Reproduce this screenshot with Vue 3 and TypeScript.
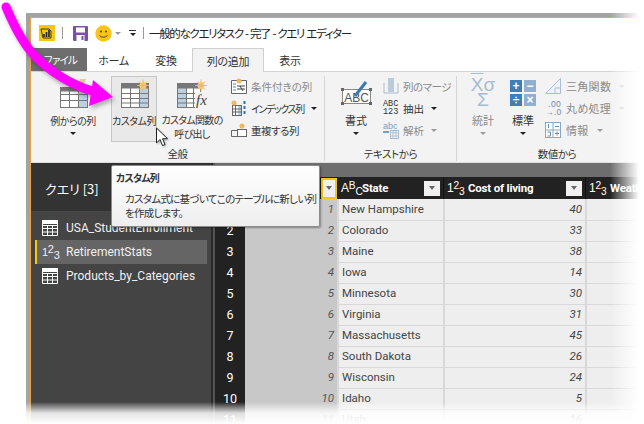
<script setup lang="ts">
interface Row { n: number; state: string; cost: number }
const names = ['New Hampshire','Colorado','Maine','Iowa','Minnesota','Virginia','Massachusetts','South Dakota','Wisconsin','Idaho','Utah']
const costs = [40,33,38,14,30,31,45,26,24,5,16]
const rows: Row[] = names.map((state, i) => ({ n: i + 1, state, cost: costs[i] }))
</script>

<template>
  <div class="page">
    <div class="window">
      <div class="inner">
        <div class="title">
          <svg class="t-logo" width="16" height="16" viewBox="0 0 16 16"><rect width="16" height="16" fill="#f2c811"/><path d="M2 4h8l2 2v7H4z" fill="none" stroke="#3a3a2a"/><path d="M5 12V9M7.500 12V7M10 12V5" stroke="#222" stroke-width="1.600"/></svg>
          <i class="t-sep"></i>
          <svg class="t-save" width="15" height="15" viewBox="0 0 15 15"><rect width="15" height="15" rx="1" fill="#7d4fa8"/><rect x="3" y="1.500" width="9" height="5" fill="#fff"/><rect x="3.500" y="9" width="8" height="6" fill="#fff"/><rect x="8.500" y="10" width="2" height="4" fill="#7d4fa8"/></svg>
          <svg class="t-smile" width="17" height="17" viewBox="0 0 17 17"><circle cx="8.500" cy="8.500" r="8.200" fill="#fcc419"/><circle cx="6" cy="6.500" r="1" fill="#444"/><circle cx="11" cy="6.500" r="1" fill="#444"/><path d="M4.500 10.500Q8.500 14 12.500 10.500" fill="none" stroke="#444"/></svg>
          <i class="caret grey t-caret"></i>
          <span class="t-more"><b></b><i class="caret"></i></span>
          <i class="t-sep"></i>
          <span class="t-text">一般的なクエリタスク - 完了 - クエリ エディター</span>
        </div>

        <div class="tabs">
          <div class="tab file">ファイル</div>
          <div class="tab home">ホーム</div>
          <div class="tab conv">変換</div>
          <div class="tab active">列の追加</div>
          <div class="tab view">表示</div>
        </div>

        <div class="ribbon">
          <section class="group g1">
            <div class="g-body">
              <div class="big b-example">
                <svg width="29" height="29" viewBox="0 0 29 29"><rect x=".5" y="8.500" width="27" height="20" fill="#fff" stroke="#777"/><rect x="18" y="9" width="9" height="19" fill="#bdd0e2"/><path d="M.5 15.500h27M.5 21.500h27M9.500 12v16M18.500 12v16" stroke="#777" fill="none"/><rect x=".5" y="8.500" width="27" height="4" fill="#777"/><path d="M20 0h6l-3 6h3l-8 10 2-7h-3z" fill="#f0c890"/></svg>
                <span class="b-label">例からの列</span>
                <i class="caret"></i>
              </div>
              <div class="big b-custom">
                <svg width="29" height="29" viewBox="0 0 29 29"><rect x=".5" y="4.500" width="27" height="24" fill="#fff" stroke="#777"/><rect x="18" y="9" width="9" height="19" fill="#bdd0e2"/><path d="M.5 14.500h27M.5 19.500h27M.5 24h27M9.500 9v19M18.500 9v19" stroke="#777" fill="none"/><rect x=".5" y="4.500" width="27" height="5" fill="#777"/><circle cx="22" cy="6.500" r="3.500" fill="#f7d18a"/><path d="M22 .5v12M16 6.500h12M18 2.500l8 8M26 2.500l-8 8" stroke="#eeb85c"/></svg>
                <span class="b-label">カスタム列</span>
              </div>
              <div class="big b-invoke">
                <svg width="31" height="29" viewBox="0 0 31 29"><rect x=".5" y="4.500" width="23" height="24" fill="#fff" stroke="#777"/><rect x="1" y="9" width="8" height="19" fill="#bdd0e2"/><path d="M.5 14.500h23M.5 19.500h23M.5 24h23M9.500 9v19M16.500 9v19" stroke="#777" fill="none"/><rect x=".5" y="4.500" width="23" height="5" fill="#777"/><rect x="18" y="13" width="13" height="16" fill="#f3f3f3"/><circle cx="24" cy="6.500" r="3.500" fill="#f7d18a"/><path d="M24 .5v12M18 6.500h12M20 2.500l8 8M28 2.500l-8 8" stroke="#eeb85c"/></svg>
                <em class="fx">fx</em>
                <span class="b-label">カスタム関数の<br>呼び出し</span>
              </div>
              <div class="smalls s-general">
                <div class="small">
                  <svg width="16" height="16" viewBox="0 0 16 16"><path d="M.5 2.500h15v13H.5z" fill="#fff" stroke="#666"/><path d="M2 6h3M2 9h3M2 12h3" stroke="#4a85c0"/><path d="M6 8h8M6 11h8M9 8l3 5" stroke="#444"/><circle cx="8" cy="3" r="2.500" fill="#eeb85c"/></svg>
                  <span class="muted">条件付きの列</span>
                </div>
                <div class="small">
                  <svg width="16" height="16" viewBox="0 0 16 16"><rect x="1.500" y="5.500" width="9" height="10" fill="#fff" stroke="#666"/><rect x="7" y="6" width="3" height="9" fill="#bdd0e2"/><path d="M1.500 9h9M1.500 12h9M4.500 6v9" stroke="#666"/><circle cx="3" cy="3" r="2.500" fill="#eeb85c"/><path d="M13.500 1v3M13.500 6v3M13.500 11v3" stroke="#2d72b5" stroke-width="2"/></svg>
                  <span class="dark kata">インデックス列</span><i class="caret"></i>
                </div>
                <div class="small">
                  <svg width="16" height="16" viewBox="0 0 16 16"><path d="M6 8.500H.5v6H6" fill="none" stroke="#666"/><rect x="6.500" y="7.500" width="9" height="7" fill="#fff" stroke="#666"/><circle cx="11" cy="4" r="2.500" fill="#eeb85c"/></svg>
                  <span class="dark tight">重複する列</span>
                </div>
              </div>
            </div>
            <div class="g-label">全般</div>
          </section>

          <section class="group g2">
            <div class="g-body">
              <div class="big b-format">
                <svg width="31" height="29" viewBox="0 0 31 29"><rect x="1.500" y="10.500" width="28" height="14" fill="#fff" stroke="#888"/><text x="15.500" y="22.500" text-anchor="middle" font-size="12" font-family="Liberation Sans, sans-serif" fill="#555">ABC</text><path d="M14 17L25 3" stroke="#3b78b5" stroke-width="3"/><rect width="3" height="3" x="0" y="9" fill="#666"/><rect width="3" height="3" x="28" y="9" fill="#666"/><rect width="3" height="3" x="0" y="23" fill="#666"/><rect width="3" height="3" x="28" y="23" fill="#666"/></svg>
                <span class="b-label">書式</span>
                <i class="caret"></i>
              </div>
              <div class="smalls s-text">
                <div class="small">
                  <svg width="16" height="16" viewBox="0 0 16 16"><path d="M1 5v10h14V5" fill="none" stroke="#a8bdd2"/><rect x="5" y="0" width="6" height="14" fill="#bccbd9"/></svg>
                  <span class="muted tight">列のマージ</span>
                </div>
                <div class="small">
                  <span class="abc123">ABC<br>123</span>
                  <span class="dark">抽出</span><i class="caret"></i>
                </div>
                <div class="small">
                  <span class="abc-ic">
                    <span class="abc">abc</span>
                    <svg width="16" height="9" viewBox="0 0 16 9"><rect x="7.500" y=".5" width="8" height="8" fill="#fff" stroke="#a8bdd2"/><path d="M7.500 3h8M7.500 6h8M10 1v7M13 1v7" stroke="#a8bdd2"/><path d="M0 2h6" stroke="#7a9ec0" stroke-width="2"/></svg>
                  </span>
                  <span class="muted">解析</span><i class="caret grey"></i>
                </div>
              </div>
            </div>
            <div class="g-label">テキストから</div>
          </section>

          <section class="group g3">
            <div class="g-body">
              <div class="big b-stat">
                <div class="sigma"><span class="x-bar">X</span>σ<br>Σ</div>
                <span class="b-label muted">統計</span>
                <i class="caret grey"></i>
              </div>
              <div class="big b-std">
                <div class="ops"><span>+</span><span class="l">−</span><span>÷</span><span class="l">×</span></div>
                <span class="b-label">標準</span>
                <i class="caret"></i>
              </div>
              <div class="smalls s-num">
                <div class="small">
                  <svg width="16" height="16" viewBox="0 0 16 16"><path d="M.5 15.500L15.500.5v15z" fill="#f0f4f8" stroke="#a8bdd2"/><path d="M10 15v-5h5" fill="none" stroke="#a8bdd2"/></svg>
                  <span class="muted">三角関数</span><i class="caret pale"></i>
                </div>
                <div class="small">
                  <span class="dec">.00<br>→.0</span>
                  <span class="muted">丸め処理</span><i class="caret pale"></i>
                </div>
                <div class="small">
                  <svg width="16" height="16" viewBox="0 0 16 16"><rect x=".5" y=".5" width="15" height="15" fill="#fff" stroke="#8ba6c1"/><path d="M8 .5v15M.5 8h15" stroke="#8ba6c1"/><path d="M10 4.500h4M10 11.500h4M12 9.500v4" stroke="#6f8daa"/><path d="M3.500 2v4M2.500 10h3v4h-3" stroke="#6f8daa" fill="none"/></svg>
                  <span class="muted">情報</span><i class="caret grey"></i>
                </div>
              </div>
            </div>
            <div class="g-label">数値から</div>
          </section>
        </div>

        <div class="body">
          <aside class="queries">
            <div class="q-head">クエリ [3]</div>
            <div class="q-item">
              <svg class="q-icon" width="16" height="16" viewBox="0 0 16 16"><path d="M.5.500h15v15H.5zM.5 5.500h15M.5 8.500h15M.5 12h15M5.500 5v11M10.500 5v11" fill="none" stroke="#fff"/><rect width="16" height="4" fill="#fff"/></svg>
              <span>USA_StudentEnrollment</span>
            </div>
            <div class="q-item selected">
              <span class="q-num">1<sup>2</sup><sub>3</sub></span>
              <span>RetirementStats</span>
            </div>
            <div class="q-item">
              <svg class="q-icon" width="16" height="16" viewBox="0 0 16 16"><path d="M.5.500h15v15H.5zM.5 5.500h15M.5 8.500h15M.5 12h15M5.500 5v11M10.500 5v11" fill="none" stroke="#fff"/><rect width="16" height="4" fill="#fff"/></svg>
              <span>Products_by_Categories</span>
            </div>
          </aside>

          <div class="data">
            <div class="formula"></div>
            <div class="grid head">
              <div class="num-h"></div>
              <div class="cell-h first"><i class="filter on"><b></b></i></div>
              <div class="cell-h"><span class="type">A<sup>B</sup><sub>C</sub></span><span class="name">State</span><i class="filter"><b></b></i></div>
              <div class="cell-h"><span class="type">1<sup>2</sup><sub>3</sub></span><span class="name">Cost of living</span><i class="filter"><b></b></i></div>
              <div class="cell-h"><span class="type">1<sup>2</sup><sub>3</sub></span><span class="name">Weather</span></div>
            </div>
            <div v-for="r in rows" :key="r.n" class="grid row">
              <div class="num">{{ r.n }}</div>
              <div class="c1">{{ r.n }}</div>
              <div class="c2">{{ r.state }}</div>
              <div class="c3">{{ r.cost }}</div>
              <div class="c4"></div>
            </div>
          </div>
        </div>
      </div>
    </div>

    <div class="fade-right"></div>
    <div class="fade-bottom"></div>

    <div class="tooltip">
      <div class="tip-title">カスタム列</div>
      <div class="tip-body">カスタム式に基づいてこのテーブルに新しい列<br>を作成します。</div>
    </div>

    <svg class="arrow" width="130" height="120" viewBox="0 0 130 120">
      <path d="M6 7C14 26 24 46 37 58C50 71 72 86 96 92" fill="none" stroke="#ff00ff" stroke-width="9" stroke-linecap="round"/>
      <path d="M93 80L113 97L89 106Z" fill="#ff00ff"/>
    </svg>

    <svg class="cursor" width="14" height="20" viewBox="0 0 14 20">
      <path d="M1.500 1v15l3.500-3.500 2.500 6 2.500-1-2.500-5.800h5z" fill="#fff" stroke="#222" stroke-linejoin="round"/>
    </svg>
  </div>
</template>

<style>
html, body { margin: 0; background: #fff; }
</style>

<style scoped>
.page {
  position: relative;
  width: 644px;
  height: 424px;
  overflow: hidden;
  background: #fff;
  font-family: "Noto Sans CJK JP", "Noto Sans", sans-serif;
  font-feature-settings: "palt";
  font-size: 11px;
  color: #333;
}
.window {
  margin: 13px 0 0 26px;
  width: 640px;
  height: 411px;
  box-sizing: border-box;
  border-top: 4px solid #a3a3a3;
  border-left: 4px solid #a3a3a3;
}
.inner {
  height: 100%;
  box-sizing: border-box;
  border-top: 1px solid #e8a33d;
  border-left: 1px solid #e8a33d;
  display: flex;
  flex-direction: column;
  background: #fff;
}
.title {
  height: 30px;
  flex: none;
  display: flex;
  align-items: center;
  padding-left: 8px;
}
.t-sep { width: 1px; height: 12px; background: #999; margin: 0 7px; }
.t-save { margin-left: 3px; }
.t-smile { margin-left: 7px; }
.t-caret { margin-left: 3px; }
.t-more { display: flex; flex-direction: column; align-items: center; gap: 2px; width: 7px; margin-left: 8px; }
.t-more b { width: 7px; height: 1px; background: #333; }
.t-text { font-size: 11.500px; color: #222; margin-left: -2px; white-space: nowrap; letter-spacing: -1.350px; word-spacing: 1px; }
.caret {
  display: inline-block;
  width: 0;
  height: 0;
  border: 3px solid transparent;
  border-top: 3.500px solid #222;
  border-bottom: 0;
}
.caret.grey { border-top-color: #9a9a9a; }
.caret.pale { border-top-color: #d6d6d6; }

.tabs {
  height: 23px;
  flex: none;
  display: flex;
  background: #fff;
  font-size: 11px;
}
.tab { display: flex; align-items: center; justify-content: center; box-sizing: border-box; letter-spacing: -.3px; }
.file { width: 56px; background: #6e6e6e; color: #fff; padding-left: 3px; font-size: 10.500px; letter-spacing: -.8px; }
.home { width: 53px; }
.conv { width: 52px; }
.active {
  width: 72px;
  border: 1px solid #cfcfcf;
  border-bottom: 0;
  background: #f3f3f3;
  position: relative;
  z-index: 1;
  margin-bottom: -1px;
}
.view { width: 52px; }

.ribbon {
  height: 92px;
  flex: none;
  display: flex;
  box-sizing: border-box;
  background: #f3f3f3;
  border-top: 1px solid #d4d4d4;
  border-bottom: 1px solid #dedede;
}
.group {
  display: flex;
  flex-direction: column;
  box-sizing: border-box;
  border-right: 1px solid #d6d6d6;
  margin: 4px 0 1px;
}
.g1 { width: 294px; }
.g2 { width: 132px; }
.g3 { width: 200px; border-right: 0; }
.g-body { height: 66px; display: flex; align-items: flex-start; }
.g-label { text-align: center; font-size: 10.500px; line-height: 14px; margin-top: 5px; letter-spacing: -.4px; }
.big {
  display: flex;
  flex-direction: column;
  align-items: center;
  box-sizing: border-box;
  height: 66px;
  position: relative;
}
.b-label { font-size: 10px; line-height: 15px; text-align: center; white-space: nowrap; margin-top: 5px; letter-spacing: -.5px; }
.b-example { width: 52px; margin-left: 16px; padding-top: 3px; }
.b-example svg { margin-left: 3px; }
.b-example .caret { margin-top: 4px; }
.b-custom {
  width: 46px;
  margin-left: 12px;
  padding-top: 2px;
  background: #e9e9e9;
  border: 1px solid #c6c6c6;
}
.b-custom svg { margin-left: 3px; }
.b-invoke { width: 64px; margin-left: 3px; padding-top: 3px; }
.b-invoke .b-label { line-height: 14px; letter-spacing: -.7px; }
.fx { position: absolute; left: 36px; top: 16px; font: italic 15px "Liberation Serif", serif; color: #444; }
.smalls { display: flex; flex-direction: column; margin-top: -1px; }
.small { height: 22px; display: flex; align-items: center; gap: 4px; white-space: nowrap; font-size: 10.500px; }
.small .caret { margin-left: 3px; }
.s-general { margin-left: 7px; }
.kata { font-size: 10px; letter-spacing: -1.400px; }
.tight { letter-spacing: -.5px; }
.muted { color: #8a8a8a; }
.dark { color: #333; }
.b-format { width: 40px; margin-left: 11px; padding-top: 3px; }
.b-format .b-label { font-size: 11px; letter-spacing: 0; }
.b-format .caret { margin-top: 4px; }
.s-text { margin-left: 7px; }
.abc-ic { width: 16px; display: flex; flex-direction: column; line-height: 8px; }
.abc { font: 9px/8px "Liberation Sans", sans-serif; color: #7a9ec0; }
.abc123 { font: 8.500px/8px "Liberation Mono", monospace; width: 16px; color: #333; }
.b-stat { width: 30px; margin-left: 11px; padding-top: 1px; }
.b-stat .b-label { margin-top: 3px; font-size: 11px; letter-spacing: 0; }
.b-stat .caret { margin-top: 4px; }
.sigma { font: 19px/15px "Liberation Sans", sans-serif; color: #a7bcd2; text-align: center; height: 33px; white-space: nowrap; }
.x-bar { text-decoration: overline; }
.b-std { width: 30px; margin-left: 10px; padding-top: 4px; }
.b-std .b-label { margin-top: 7px; font-size: 11px; letter-spacing: 0; }
.b-std .caret { margin-top: 4px; }
.ops { display: grid; grid-template-columns: 12px 12px; grid-auto-rows: 12px; gap: 2px; }
.ops span { background: #3e7fbb; color: #fff; font: bold 12px/12px "Liberation Sans", sans-serif; text-align: center; }
.ops .l { background: #8fb0cf; }
.s-num { margin-left: 7px; }
.s-num .small { gap: 5px; font-size: 11px; letter-spacing: .3px; }
.dec { font: 8.500px/8px "Liberation Sans", sans-serif; color: #6f8daa; width: 16px; text-align: right; }

.body { flex: 1; min-height: 0; display: flex; background: #555; overflow: hidden; }
.queries { width: 180px; flex: none; background: #444; border-right: 2px solid #2a2a2a; }
.q-head {
  height: 48px;
  background: #333;
  color: #fff;
  font-size: 13px;
  line-height: 52px;
  padding-left: 14px;
  box-sizing: border-box;
}
.q-item {
  height: 24px;
  display: flex;
  align-items: center;
  margin: 0 4px;
  padding-left: 7px;
  gap: 8px;
  color: #f0f0f0;
  font: 12px Roboto, sans-serif;
  white-space: nowrap;
}
.q-item:nth-child(2) { margin-top: 5px; }
.selected { background: #656565; box-shadow: inset 2px 0 0 #f2c811; }
.q-num { width: 16px; flex: none; font: 11px "Liberation Sans", sans-serif; letter-spacing: -.3px; white-space: nowrap; }
sup, sub { font-size: 1em; line-height: 0; }
sup { vertical-align: 3px; }
sub { vertical-align: -3px; }

.data { flex: 1; min-width: 0; margin-left: 2px; background: #eee; }
.formula { height: 14px; background: #6e6e6e; }
.grid { display: grid; grid-template-columns: 30px 92px 106px 142px 1fr; }
.head { height: 22px; background: #222; color: #fff; font: bold 11.500px Roboto, sans-serif; letter-spacing: -.2px; }
.cell-h { display: flex; align-items: center; position: relative; padding-left: 3px; border-left: 1px solid #111; white-space: nowrap; }
.first { justify-content: flex-end; padding: 0; }
.type { font: 12px "Liberation Sans", sans-serif; width: 21px; flex: none; letter-spacing: -.2px; }
.type sup, .type sub { font-size: .85em; }
.name { flex: 1; }
.filter {
  flex: none;
  width: 16px;
  height: 15px;
  margin-right: 3px;
  background: #f0f0f0;
  display: flex;
  align-items: center;
  justify-content: center;
}
.filter.on { box-sizing: border-box; width: 16px; height: 21px; margin-right: 0; border: 2px solid #f2c811; }
.filter b { width: 0; height: 0; border: 3.500px solid transparent; border-top: 4px solid #666; border-bottom: 0; }
.row { height: 21px; box-sizing: border-box; font: 11.500px/21px Roboto, sans-serif; color: #444; }
.num { background: #222; color: #fff; text-align: center; font-size: 12.500px; border-bottom: 1px solid #333; }
.c1 { background: #c8c8c8; text-align: right; padding-right: 3px; font-style: italic; color: #555; border-bottom: 1px solid #d4d4d4; }
.c2, .c3, .c4 { border-left: 2px solid #d8d8d8; border-bottom: 1px solid #d8d8d8; padding: 0 3px; }
.c3 { text-align: right; font-style: italic; }

.fade-right {
  position: absolute;
  top: 0;
  right: 0;
  width: 34px;
  height: 424px;
  background: linear-gradient(to right, rgba(255,255,255,0), #fff 85%);
}
.fade-bottom {
  position: absolute;
  left: 0;
  bottom: 0;
  width: 644px;
  height: 22px;
  background: linear-gradient(to bottom, rgba(255,255,255,0), rgba(255,255,255,.85) 50%, #fff);
}
.tooltip {
  position: absolute;
  left: 111px;
  top: 165px;
  width: 209px;
  height: 62px;
  box-sizing: border-box;
  background: linear-gradient(#fff, #eee);
  border: 1px solid #8c8c8c;
  border-radius: 2px;
  box-shadow: 1px 1px 2px rgba(0,0,0,.35);
  color: #333;
  font-size: 10.500px;
  padding: 4px 4px;
}
.tip-title { font-weight: 700; font-size: 10px; letter-spacing: -.8px; line-height: 16px; }
.tip-body { margin: 6px 0 0 9px; line-height: 14px; white-space: nowrap; letter-spacing: -.7px; }
.arrow { position: absolute; left: 0; top: 0; filter: drop-shadow(2px 3px 2px rgba(0,0,0,.3)); }
.cursor { position: absolute; left: 155px; top: 127px; filter: drop-shadow(1px 1px 1px rgba(0,0,0,.3)); }
</style>
